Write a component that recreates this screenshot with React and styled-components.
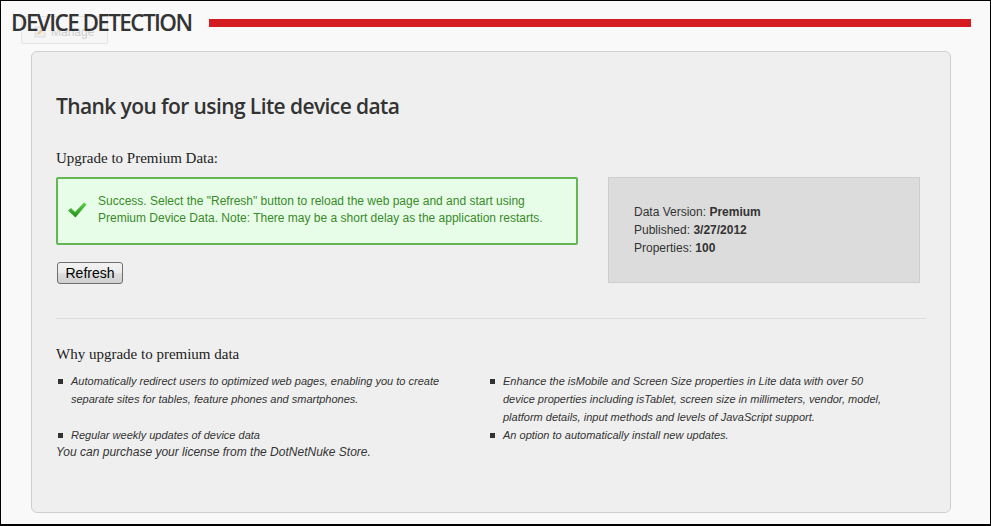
import React from "react";
import styled, { createGlobalStyle } from "styled-components";

const Global = createGlobalStyle`
  html, body { margin: 0; padding: 0; background: #f9f9f9; }
  * { box-sizing: border-box; }
`;

const Frame = styled.div`
  position: relative;
  width: 991px;
  height: 526px;
  border: 1px solid #000;
  border-bottom-width: 2px;
  background: #f9f9f9;
  overflow: hidden;
`;

const Header = styled.div`
  display: flex;
  align-items: flex-start;
  gap: 18px;
  padding: 8px 19px 0 10px;
  height: 45px;
`;

const HeaderTitle = styled.h1`
  margin: 0;
  font-family: "Open Sans", sans-serif;
  font-weight: 600;
  font-size: 22.5px;
  letter-spacing: -1.6px;
  line-height: 28px;
  color: #333;
  position: relative;
  z-index: 1;
  white-space: nowrap;
`;

const RedBar = styled.div`
  flex: 1;
  height: 8px;
  margin-top: 10px;
  background: #d61a21;
`;

const ManageButton = styled.div`
  position: absolute;
  left: 20px;
  top: 15px;
  width: 87px;
  height: 28px;
  border: 1px solid #e4e4e4;
  border-radius: 2px;
  background: #f6f6f6;
  display: flex;
  align-items: flex-end;
  gap: 5px;
  padding: 0 0 5px 12px;
  font-family: "Liberation Sans", Arial, sans-serif;
  font-size: 12px;
  line-height: 12px;
  color: #cfcfcf;
  z-index: 0;
`;

const Panel = styled.div`
  margin: 5px 39px 0 30px;
  height: 462px;
  border: 1px solid #cfcfcf;
  border-radius: 6px;
  background: #efefef;
  padding: 40px 24px 0 24px;
`;

const Title = styled.h2`
  margin: 0;
  font-family: "Open Sans", sans-serif;
  font-weight: 600;
  font-size: 21px;
  letter-spacing: -0.6px;
  line-height: 28px;
  color: #333;
`;

const SerifLabel = styled.div`
  font-family: "Liberation Serif", "Times New Roman", serif;
  font-size: 15px;
  color: #222;
  margin-top: ${(p) => p.$mt}px;
  line-height: 18px;
`;

const TopRow = styled.div`
  display: flex;
  align-items: flex-start;
  gap: 30px;
  margin-top: 10px;
`;

const LeftCol = styled.div`
  width: 522px;
`;

const SuccessBox = styled.div`
  height: 68px;
  border: 2px solid #64b554;
  border-radius: 2px;
  background: #e8fde8;
  display: flex;
  align-items: center;
  padding: 0 0 3px 9px;
  gap: 11px;
`;

const SuccessText = styled.div`
  font-family: "Liberation Sans", Arial, sans-serif;
  font-size: 12px;
  line-height: 17px;
  color: #388a28;
`;

const RefreshButton = styled.button`
  margin-top: 17px;
  margin-left: 1px;
  height: 22px;
  width: 66px;
  padding: 0;
  border: 1px solid #707070;
  border-radius: 3px;
  background: linear-gradient(#f2f2f2 0%, #ebebeb 50%, #dddddd 51%, #cfcfcf 100%);
  font-family: "Liberation Sans", Arial, sans-serif;
  font-size: 14px;
  color: #000;
`;

const InfoBox = styled.div`
  width: 312px;
  height: 106px;
  background: #dcdcdc;
  border: 1px solid #cdcdcd;
  padding: 25px 0 0 25px;
  font-family: "Liberation Sans", Arial, sans-serif;
  font-size: 12px;
  line-height: 18px;
  color: #333;
`;

const Divider = styled.hr`
  border: 0;
  border-top: 1px solid #dcdcdc;
  margin: 34px 0 0 0;
`;

const Columns = styled.div`
  display: grid;
  grid-template-columns: 432px 1fr;
  margin-top: 9px;
`;

const List = styled.ul`
  list-style: none;
  margin: 0;
  padding: 0;
`;

const Item = styled.li`
  position: relative;
  padding-left: 15px;
  margin-bottom: ${(p) => (p.$gap ? 18 : 0)}px;
  font-family: "Liberation Sans", Arial, sans-serif;
  font-style: italic;
  font-size: 11px;
  line-height: 18px;
  color: #333;
  &::before {
    content: "";
    position: absolute;
    left: 2px;
    top: 7px;
    width: 5px;
    height: 5px;
    background: #333;
  }
`;

const Note = styled.div`
  font-family: "Liberation Sans", Arial, sans-serif;
  font-style: italic;
  font-size: 12px;
  line-height: 16px;
  color: #333;
`;

function Check() {
  return (
    <svg width="20" height="18" viewBox="0 0 20 18">
      <defs>
        <linearGradient id="cg" x1="0" y1="0" x2="0" y2="1">
          <stop offset="0" stopColor="#5fd14a" />
          <stop offset="1" stopColor="#1f8f1c" />
        </linearGradient>
      </defs>
      <path d="M1 9.5 L4 7 L8 11 L17 1.5 L19.5 3.5 L8.5 16.5 Z" fill="url(#cg)" />
    </svg>
  );
}

function Pencil() {
  return (
    <svg width="12" height="12" viewBox="0 0 12 12">
      <rect x="1" y="1" width="10" height="10" fill="#eee" stroke="#ddd" />
      <path d="M3 9 L4 6.5 L8 2.5 L9.5 4 L5.5 8 Z" fill="#e8c89a" />
    </svg>
  );
}

export default function App() {
  return (
    <>
      <Global />
      <Frame>
        <ManageButton>
          <Pencil />
          Manage
        </ManageButton>
        <Header>
          <HeaderTitle>DEVICE DETECTION</HeaderTitle>
          <RedBar />
        </Header>
        <Panel>
          <Title>Thank you for using Lite device data</Title>
          <SerifLabel $mt={29}>Upgrade to Premium Data:</SerifLabel>
          <TopRow>
            <LeftCol>
              <SuccessBox>
                <Check />
                <SuccessText>
                  Success. Select the "Refresh" button to reload the web page and and start using
                  <br />
                  Premium Device Data. Note: There may be a short delay as the application restarts.
                </SuccessText>
              </SuccessBox>
              <RefreshButton>Refresh</RefreshButton>
            </LeftCol>
            <InfoBox>
              Data Version: <b>Premium</b>
              <br />
              Published: <b>3/27/2012</b>
              <br />
              Properties: <b>100</b>
            </InfoBox>
          </TopRow>
          <Divider />
          <SerifLabel $mt={26}>Why upgrade to premium data</SerifLabel>
          <Columns>
            <div>
              <List>
                <Item $gap>
                  Automatically redirect users to optimized web pages, enabling you to create
                  <br />
                  separate sites for tables, feature phones and smartphones.
                </Item>
                <Item>Regular weekly updates of device data</Item>
              </List>
              <Note>You can purchase your license from the DotNetNuke Store.</Note>
            </div>
            <List>
              <Item>
                Enhance the isMobile and Screen Size properties in Lite data with over 50
                <br />
                device properties including isTablet, screen size in millimeters, vendor, model,
                <br />
                platform details, input methods and levels of JavaScript support.
              </Item>
              <Item>An option to automatically install new updates.</Item>
            </List>
          </Columns>
        </Panel>
      </Frame>
    </>
  );
}
